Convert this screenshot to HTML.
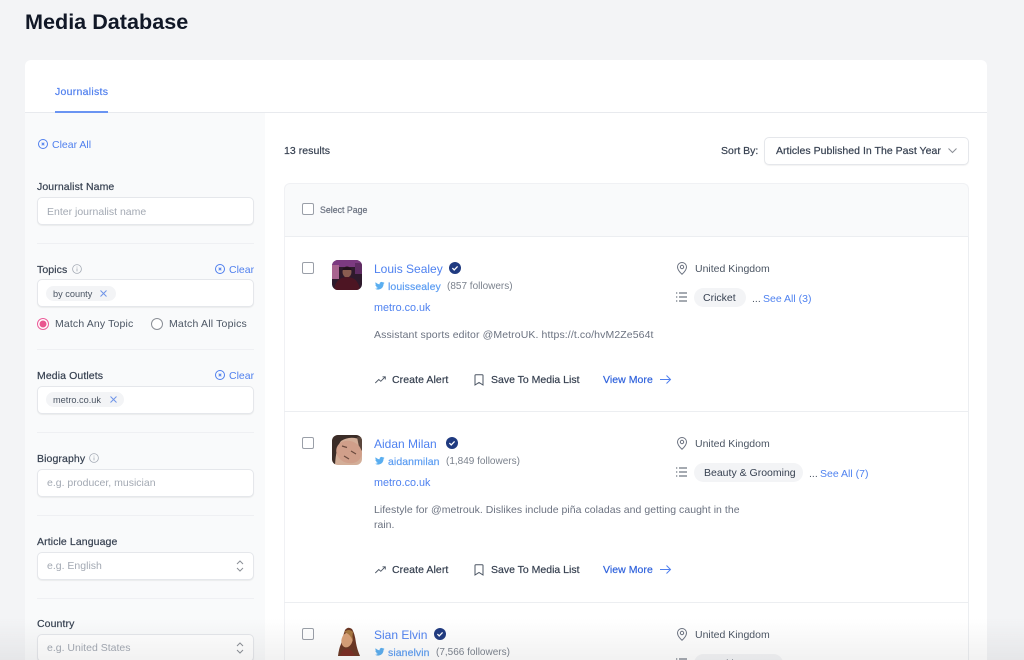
<!DOCTYPE html>
<html style="height:660px;overflow:hidden"><head><meta charset="utf-8"><title>Media Database</title>
<style>
html,body{margin:0;padding:0}
body{width:1024px;height:660px;overflow:hidden;background:#f3f4f6;font-family:"Liberation Sans",sans-serif;font-size:10.5px;color:#4b5563}
#w{position:relative;width:1024px;height:660px;overflow:hidden;filter:blur(.3px)}
.a{position:absolute}
.t{position:absolute;white-space:nowrap;line-height:16px;height:16px;margin-top:1px}
.m{-webkit-text-stroke:.2px currentColor}
.lab{color:#374151;font-size:10.5px;letter-spacing:.1px;-webkit-text-stroke:.2px currentColor}
.blue{color:#4f7fee}
.ph{color:#a3a9b3;font-size:10.5px}
.inp{position:absolute;left:37px;width:215px;height:26px;background:#fff;border:1px solid #e5e7eb;border-radius:5px;box-shadow:0 1px 1px rgba(0,0,0,.06)}
.div{position:absolute;left:37px;width:217px;height:1px;background:#eff0f3}
.chip{position:absolute;height:15px;background:#f3f4f6;border-radius:8px}
.pill{position:absolute;height:19px;background:#f3f4f6;border-radius:10px}
.cb{position:absolute;left:302px;width:10px;height:10px;border:1.2px solid #9a9fa8;border-radius:2px;background:#fff}
.row{position:absolute;left:284px;width:684px;height:1px;background:#eceef1}
svg{position:absolute;overflow:visible}
</style></head><body><div id="w">
<div class="t" style="left:25px;top:8px;height:26px;line-height:26px;font-size:21.6px;font-weight:700;color:#111827">Media Database</div>

<div class="a" style="left:25px;top:60px;width:962px;height:600px;background:#fff;border-radius:6px 6px 0 0"></div>
<div class="a" style="left:25px;top:112px;width:962px;height:1px;background:#e8eaee"></div>
<div class="a" style="left:55px;top:111px;width:53px;height:2px;background:#6a94f2"></div>
<div class="t m" style="left:55px;top:83px;font-size:10.5px;letter-spacing:.28px;color:#4f7fee">Journalists</div>

<div class="a" style="left:25px;top:113px;width:240px;height:547px;background:#f9fafb"></div>

<!-- sidebar -->
<svg style="left:38px;top:139px" width="10" height="10" viewBox="0 0 10 10" fill="none" stroke="#4f7fee"><circle cx="5" cy="5" r="4.5"/><path d="M3.7 3.7l2.6 2.6M6.3 3.7L3.7 6.3"/></svg>
<div class="t blue" style="left:52px;top:136px">Clear All</div>

<div class="t lab" style="left:37px;top:178px">Journalist Name</div>
<div class="inp" style="top:197px"></div>
<div class="t ph" style="left:47px;top:203px">Enter journalist name</div>
<div class="div" style="top:243px"></div>

<div class="t lab" style="left:37px;top:261px">Topics</div>
<svg style="left:72px;top:264px" width="10" height="10" viewBox="0 0 10 10" fill="none" stroke="#a3a9b3" stroke-width=".8"><circle cx="5" cy="5" r="4.4"/><path d="M5 4.4v3M5 2.6v.9"/></svg>
<svg style="left:215px;top:264px" width="10" height="10" viewBox="0 0 10 10" fill="none" stroke="#4f7fee"><circle cx="5" cy="5" r="4.5"/><path d="M3.7 3.7l2.6 2.6M6.3 3.7L3.7 6.3"/></svg>
<div class="t blue" style="left:229px;top:261px">Clear</div>
<div class="inp" style="top:279px"></div>
<div class="chip" style="left:46px;top:286px;width:70px"></div>
<div class="t" style="left:53px;top:286px;height:15px;line-height:15px;font-size:9.2px;color:#4b5563">by county</div>
<svg style="left:100px;top:290px" width="7" height="7" viewBox="0 0 7 7" fill="none" stroke="#6f94e8"><path d="M.5.5l6 6M6.5.5l-6 6"/></svg>
<svg style="left:37px;top:318px" width="12" height="12" viewBox="0 0 12 12"><circle cx="6" cy="6" r="5.5" fill="#fff" stroke="#ec5c9a"/><circle cx="6" cy="6" r="3.5" fill="#e9558f"/></svg>
<div class="t" style="left:55px;top:315px;letter-spacing:.14px;color:#4b5563">Match Any Topic</div>
<svg style="left:151px;top:318px" width="12" height="12" viewBox="0 0 12 12"><circle cx="6" cy="6" r="5.5" fill="#fff" stroke="#8b8f96"/></svg>
<div class="t" style="left:169px;top:315px;letter-spacing:.18px;color:#4b5563">Match All Topics</div>
<div class="div" style="top:349px"></div>

<div class="t lab" style="left:37px;top:367px">Media Outlets</div>
<svg style="left:215px;top:370px" width="10" height="10" viewBox="0 0 10 10" fill="none" stroke="#4f7fee"><circle cx="5" cy="5" r="4.5"/><path d="M3.7 3.7l2.6 2.6M6.3 3.7L3.7 6.3"/></svg>
<div class="t blue" style="left:229px;top:367px">Clear</div>
<div class="inp" style="top:386px"></div>
<div class="chip" style="left:46px;top:392px;width:78px"></div>
<div class="t" style="left:53px;top:392px;height:15px;line-height:15px;font-size:9.2px;color:#4b5563">metro.co.uk</div>
<svg style="left:110px;top:396px" width="7" height="7" viewBox="0 0 7 7" fill="none" stroke="#6f94e8"><path d="M.5.5l6 6M6.5.5l-6 6"/></svg>
<div class="div" style="top:432px"></div>

<div class="t lab" style="left:37px;top:450px">Biography</div>
<svg style="left:89px;top:453px" width="10" height="10" viewBox="0 0 10 10" fill="none" stroke="#a3a9b3" stroke-width=".8"><circle cx="5" cy="5" r="4.4"/><path d="M5 4.4v3M5 2.6v.9"/></svg>
<div class="inp" style="top:469px"></div>
<div class="t ph" style="left:47px;top:474px">e.g. producer, musician</div>
<div class="div" style="top:515px"></div>

<div class="t lab" style="left:37px;top:533px">Article Language</div>
<div class="inp" style="top:552px"></div>
<div class="t ph" style="left:47px;top:557px">e.g. English</div>
<svg style="left:236px;top:560px" width="8" height="12" viewBox="0 0 8 12" fill="none" stroke="#8b8f96"><path d="M1 4l3-3 3 3M1 8l3 3 3-3"/></svg>
<div class="div" style="top:598px"></div>

<div class="t lab" style="left:37px;top:615px">Country</div>
<div class="inp" style="top:634px"></div>
<div class="t ph" style="left:47px;top:639px">e.g. United States</div>
<svg style="left:236px;top:642px" width="8" height="12" viewBox="0 0 8 12" fill="none" stroke="#8b8f96"><path d="M1 4l3-3 3 3M1 8l3 3 3-3"/></svg>

<!-- toolbar -->
<div class="t m" style="left:284px;top:142px;color:#374151;letter-spacing:.05px">13 results</div>
<div class="t m" style="left:721px;top:142px;color:#374151">Sort By:</div>
<div class="a" style="left:764px;top:137px;width:203px;height:26px;background:#fff;border:1px solid #e5e7eb;border-radius:5px;box-shadow:0 1px 1px rgba(0,0,0,.05)"></div>
<div class="t m" style="left:776px;top:142px;color:#374151;letter-spacing:.03px">Articles Published In The Past Year</div>
<svg style="left:948px;top:148px" width="9" height="5" viewBox="0 0 9 5" fill="none" stroke="#8b8f96"><path d="M.5.5l4 4 4-4"/></svg>

<!-- list -->
<div class="a" style="left:284px;top:183px;width:685px;height:54px;box-sizing:border-box;background:#f9fafb;border:1px solid #f0f1f4;border-bottom-color:#eceef1;border-radius:6px 6px 0 0"></div>
<div class="a" style="left:968px;top:237px;width:1px;height:423px;background:#eceef1"></div>
<div class="a" style="left:284px;top:237px;width:1px;height:423px;background:#f0f1f4"></div>
<div class="cb" style="top:203px"></div>
<div class="t m" style="left:320px;top:201px;font-size:8.8px;color:#6b7280">Select Page</div>

<div class="row" style="top:411px"></div>
<div class="row" style="top:602px"></div>

<!-- ROW 1 -->
<div class="cb" style="top:262px"></div>
<svg style="left:332px;top:260px" width="30" height="30" viewBox="0 0 30 30"><defs><clipPath id="c1"><rect width="30" height="30" rx="6"/></clipPath></defs><g clip-path="url(#c1)"><rect width="30" height="30" fill="#2e1a2c"/><rect width="30" height="7" fill="#7c3a80"/><rect x="0" y="5" width="7" height="14" fill="#a8648f"/><rect x="23" y="3" width="7" height="11" fill="#5f2c62"/><ellipse cx="15" cy="12" rx="4.5" ry="5.500" fill="#8a5c50"/><path d="M10.500 9q4.500-5 9 0v1h-9z" fill="#24121c"/><path d="M2 30q2-13 13-13t13 13z" fill="#4d1523"/></g></svg>
<div class="t" style="left:374px;top:260px;font-size:12px;color:#4f82f0">Louis Sealey</div>
<svg style="left:449px;top:262px" width="12" height="12" viewBox="0 0 12 12"><circle cx="6" cy="6" r="6" fill="#1f3a80"/><path d="M3.4 6.100l1.800 1.800 3.400-3.500" fill="none" stroke="#fff" stroke-width="1.300"/></svg>
<svg style="left:375px;top:281px" width="9.500" height="9.500" viewBox="0 0 24 24" fill="#5aaef0"><path d="M23.953 4.570a10 10 0 01-2.825.775 4.958 4.958 0 002.163-2.723c-.951.555-2.005.959-3.127 1.184a4.920 4.920 0 00-8.384 4.482C7.690 8.095 4.067 6.130 1.640 3.162a4.822 4.822 0 00-.666 2.475c0 1.710.870 3.213 2.188 4.096a4.904 4.904 0 01-2.228-.616v.060a4.923 4.923 0 003.946 4.827 4.996 4.996 0 01-2.212.085 4.936 4.936 0 004.604 3.417 9.867 9.867 0 01-6.102 2.105c-.390 0-.779-.023-1.170-.067a13.995 13.995 0 007.557 2.209c9.053 0 13.998-7.496 13.998-13.985 0-.210 0-.420-.015-.630A9.935 9.935 0 0024 4.590z"/></svg>
<div class="t m" style="left:388px;top:278px;letter-spacing:.08px;color:#5c9df2">louissealey</div>
<div class="t" style="left:447px;top:278px;font-size:10px;color:#7b828d">(857 followers)</div>
<div class="t" style="left:374px;top:299px;font-size:10.8px;color:#4f82f0">metro.co.uk</div>
<div class="t" style="left:374px;top:326px;letter-spacing:.1px;color:#6b7280">Assistant sports editor @MetroUK. https://t.co/hvM2Ze564t</div>
<svg style="left:375px;top:376px" width="11" height="8" viewBox="0 0 11 8" fill="none" stroke="#4b5563" stroke-width=".9"><path d="M.3 7l3.500-3.500 2 1.800L10 1M7.500.8H10.300V3.500"/></svg>
<div class="t m" style="left:392px;top:371px;letter-spacing:.08px;color:#374151">Create Alert</div>
<svg style="left:474px;top:374px" width="10" height="12" viewBox="0 0 10 12" fill="none" stroke="#4b5563"><path d="M1 1.500Q1 .7 1.800 .7H8.200Q9 .7 9 1.500V11L5 8.500 1 11z"/></svg>
<div class="t m" style="left:491px;top:371px;color:#374151">Save To Media List</div>
<div class="t m" style="left:603px;top:371px;letter-spacing:.05px;color:#2f62dc">View More</div>
<svg style="left:660px;top:375px" width="11" height="9" viewBox="0 0 11 9" fill="none" stroke="#4f7fee"><path d="M0 4.500H10.300M6.500.5l4 4-4 4"/></svg>
<svg style="left:677px;top:262px" width="10" height="13" viewBox="0 0 10 13" fill="none" stroke="#6b7280"><path d="M5 12.300C2.500 10 .5 7.800.5 5a4.500 4.500 0 019 0c0 2.800-2 5-4.500 7.300z"/><circle cx="5" cy="5" r="1.700"/></svg>
<div class="t" style="left:695px;top:260px;color:#4b5563">United Kingdom</div>
<svg style="left:676px;top:292px" width="11" height="10" viewBox="0 0 11 10" fill="none" stroke="#4b5563"><path d="M3 1h8M3 5h8M3 9h8M0 1h1.300M0 5h1.300M0 9h1.300"/></svg>
<div class="pill" style="left:694px;top:288px;width:52px"></div>
<div class="t" style="left:703px;top:289px;color:#374151">Cricket</div>
<div class="t" style="left:752px;top:290px;color:#4b5563">...</div>
<div class="t" style="left:763px;top:290px;color:#4f82f0">See All (3)</div>

<!-- ROW 2 -->
<div class="cb" style="top:437px"></div>
<svg style="left:332px;top:435px" width="30" height="30" viewBox="0 0 30 30"><defs><clipPath id="c2"><rect width="30" height="30" rx="6"/></clipPath></defs><g clip-path="url(#c2)"><rect width="30" height="30" fill="#d3ae98"/><path d="M0 0H30V5Q18 0 9 6 4 12 3 30H0z" fill="#3a2c27"/><path d="M25 2L30 2V16L27 12z" fill="#5a463c"/><ellipse cx="17" cy="17" rx="13" ry="11" fill="#d09f8a" transform="rotate(20 17 17)"/><path d="M10 11l5 1.500M19 16l5 3M12 21l5 3" stroke="#6a4a3e" stroke-width="1.200"/></g></svg>
<div class="t" style="left:374px;top:435px;font-size:12px;color:#4f82f0">Aidan Milan</div>
<svg style="left:446px;top:437px" width="12" height="12" viewBox="0 0 12 12"><circle cx="6" cy="6" r="6" fill="#1f3a80"/><path d="M3.4 6.100l1.800 1.800 3.400-3.500" fill="none" stroke="#fff" stroke-width="1.300"/></svg>
<svg style="left:375px;top:456px" width="9.500" height="9.500" viewBox="0 0 24 24" fill="#5aaef0"><path d="M23.953 4.570a10 10 0 01-2.825.775 4.958 4.958 0 002.163-2.723c-.951.555-2.005.959-3.127 1.184a4.920 4.920 0 00-8.384 4.482C7.690 8.095 4.067 6.130 1.640 3.162a4.822 4.822 0 00-.666 2.475c0 1.710.870 3.213 2.188 4.096a4.904 4.904 0 01-2.228-.616v.060a4.923 4.923 0 003.946 4.827 4.996 4.996 0 01-2.212.085 4.936 4.936 0 004.604 3.417 9.867 9.867 0 01-6.102 2.105c-.390 0-.779-.023-1.170-.067a13.995 13.995 0 007.557 2.209c9.053 0 13.998-7.496 13.998-13.985 0-.210 0-.420-.015-.630A9.935 9.935 0 0024 4.590z"/></svg>
<div class="t m" style="left:388px;top:453px;letter-spacing:.08px;color:#5c9df2">aidanmilan</div>
<div class="t" style="left:446px;top:453px;font-size:10px;color:#7b828d">(1,849 followers)</div>
<div class="t" style="left:374px;top:474px;font-size:10.8px;color:#4f82f0">metro.co.uk</div>
<div class="t" style="left:374px;top:501px;letter-spacing:.03px;color:#6b7280">Lifestyle for @metrouk. Dislikes include piña coladas and getting caught in the</div>
<div class="t" style="left:374px;top:516px;color:#6b7280">rain.</div>
<svg style="left:375px;top:566px" width="11" height="8" viewBox="0 0 11 8" fill="none" stroke="#4b5563" stroke-width=".9"><path d="M.3 7l3.500-3.500 2 1.800L10 1M7.500.8H10.300V3.500"/></svg>
<div class="t m" style="left:392px;top:561px;letter-spacing:.08px;color:#374151">Create Alert</div>
<svg style="left:474px;top:564px" width="10" height="12" viewBox="0 0 10 12" fill="none" stroke="#4b5563"><path d="M1 1.500Q1 .7 1.800 .7H8.200Q9 .7 9 1.500V11L5 8.500 1 11z"/></svg>
<div class="t m" style="left:491px;top:561px;color:#374151">Save To Media List</div>
<div class="t m" style="left:603px;top:561px;letter-spacing:.05px;color:#2f62dc">View More</div>
<svg style="left:660px;top:565px" width="11" height="9" viewBox="0 0 11 9" fill="none" stroke="#4f7fee"><path d="M0 4.500H10.300M6.500.5l4 4-4 4"/></svg>
<svg style="left:677px;top:437px" width="10" height="13" viewBox="0 0 10 13" fill="none" stroke="#6b7280"><path d="M5 12.300C2.500 10 .5 7.800.5 5a4.500 4.500 0 019 0c0 2.800-2 5-4.500 7.300z"/><circle cx="5" cy="5" r="1.700"/></svg>
<div class="t" style="left:695px;top:435px;color:#4b5563">United Kingdom</div>
<svg style="left:676px;top:467px" width="11" height="10" viewBox="0 0 11 10" fill="none" stroke="#4b5563"><path d="M3 1h8M3 5h8M3 9h8M0 1h1.300M0 5h1.300M0 9h1.300"/></svg>
<div class="pill" style="left:694px;top:463px;width:109px"></div>
<div class="t" style="left:704px;top:464px;color:#374151">Beauty &amp; Grooming</div>
<div class="t" style="left:809px;top:465px;color:#4b5563">...</div>
<div class="t" style="left:820px;top:465px;color:#4f82f0">See All (7)</div>

<!-- ROW 3 -->
<div class="cb" style="top:628px"></div>
<svg style="left:332px;top:626px" width="30" height="30" viewBox="0 0 30 30"><path d="M6 30q1-8 3-12 2-8 4-14 3-4 7-1 3 5 4 14 1 6 4 13z" fill="#6a3522"/><ellipse cx="15" cy="14" rx="5.500" ry="7.500" fill="#d9a077" transform="rotate(15 15 14)"/><path d="M12 6q5-4 9 0-1 5 0 10-2-8-9-10z" fill="#a6763f"/><path d="M8 30q2-7 7-7t8 7z" fill="#7a2c22"/></svg>
<div class="t" style="left:374px;top:626px;font-size:12px;color:#4f82f0">Sian Elvin</div>
<svg style="left:434px;top:628px" width="12" height="12" viewBox="0 0 12 12"><circle cx="6" cy="6" r="6" fill="#1f3a80"/><path d="M3.4 6.100l1.800 1.800 3.400-3.500" fill="none" stroke="#fff" stroke-width="1.300"/></svg>
<svg style="left:375px;top:647px" width="9.500" height="9.500" viewBox="0 0 24 24" fill="#5aaef0"><path d="M23.953 4.570a10 10 0 01-2.825.775 4.958 4.958 0 002.163-2.723c-.951.555-2.005.959-3.127 1.184a4.920 4.920 0 00-8.384 4.482C7.690 8.095 4.067 6.130 1.640 3.162a4.822 4.822 0 00-.666 2.475c0 1.710.870 3.213 2.188 4.096a4.904 4.904 0 01-2.228-.616v.060a4.923 4.923 0 003.946 4.827 4.996 4.996 0 01-2.212.085 4.936 4.936 0 004.604 3.417 9.867 9.867 0 01-6.102 2.105c-.390 0-.779-.023-1.170-.067a13.995 13.995 0 007.557 2.209c9.053 0 13.998-7.496 13.998-13.985 0-.210 0-.420-.015-.630A9.935 9.935 0 0024 4.590z"/></svg>
<div class="t m" style="left:388px;top:644px;letter-spacing:.08px;color:#5c9df2">sianelvin</div>
<div class="t" style="left:436px;top:644px;font-size:10px;color:#7b828d">(7,566 followers)</div>
<svg style="left:677px;top:628px" width="10" height="13" viewBox="0 0 10 13" fill="none" stroke="#6b7280"><path d="M5 12.300C2.500 10 .5 7.800.5 5a4.500 4.500 0 019 0c0 2.800-2 5-4.500 7.300z"/><circle cx="5" cy="5" r="1.700"/></svg>
<div class="t" style="left:695px;top:626px;color:#4b5563">United Kingdom</div>
<svg style="left:676px;top:658px" width="11" height="10" viewBox="0 0 11 10" fill="none" stroke="#4b5563"><path d="M3 1h8M3 5h8M3 9h8M0 1h1.300M0 5h1.300M0 9h1.300"/></svg>
<div class="pill" style="left:694px;top:654px;width:89px"></div>
<div class="t" style="left:704px;top:655px;color:#374151">Breaking News</div>

<!-- bottom fade -->
<div class="a" style="left:0;top:618px;width:1024px;height:42px;background:linear-gradient(rgba(80,80,80,0),rgba(80,80,80,.08))"></div>
</div></body></html>
